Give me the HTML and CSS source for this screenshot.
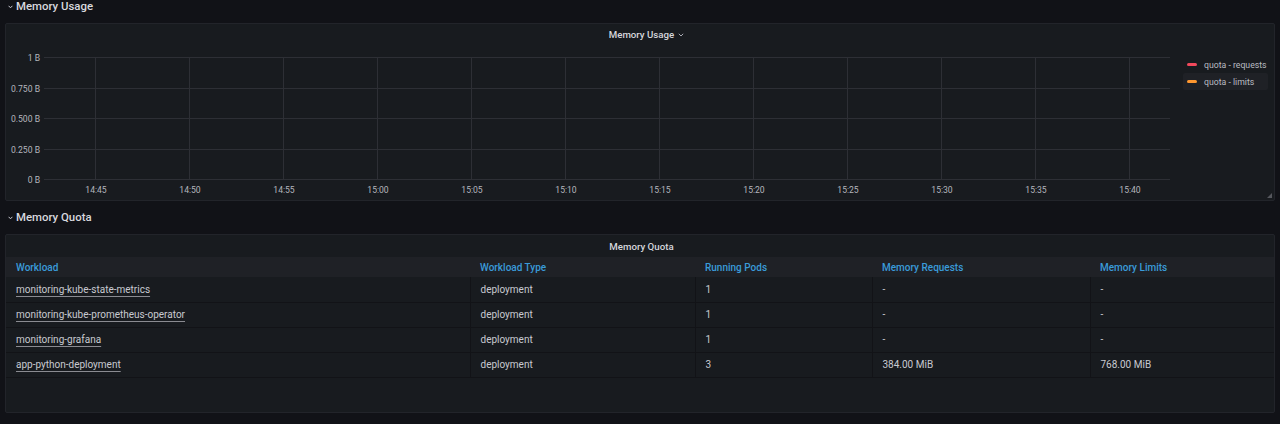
FILE: index.html
```html
<!DOCTYPE html>
<html>
<head>
<meta charset="utf-8">
<link rel="stylesheet" href="styles.css">
</head>
<body>
<div class="dash">
  <div class="row-head">
    <svg class="row-chev" width="5" height="4" viewBox="0 0 5 4"><path d="M0.6 0.8 L2.5 2.8 L4.4 0.8" fill="none" stroke="#c7c9d1" stroke-width="1"/></svg>
    <span>Memory Usage</span>
  </div>
  <section class="panel panel-graph">
    <div class="panel-title"><span class="title-text">Memory Usage</span><svg class="title-chev" width="6" height="4" viewBox="0 0 6 4"><path d="M0.8 0.8 L3 3 L5.2 0.8" fill="none" stroke="#a8aab3" stroke-width="1"/></svg></div>
    <div class="graph">
      <svg class="plot" width="1166" height="156" viewBox="0 0 1166 156">
        <g class="grid-h">
          <line x1="38" y1="13.5" x2="1164" y2="13.5"/>
          <line x1="38" y1="44.5" x2="1164" y2="44.5"/>
          <line x1="38" y1="74.5" x2="1164" y2="74.5"/>
          <line x1="38" y1="105.5" x2="1164" y2="105.5"/>
          <line x1="38" y1="135.5" x2="1164" y2="135.5"/>
        </g>
        <g class="grid-v">
          <line x1="89.5" y1="13" x2="89.5" y2="136"/>
          <line x1="183.5" y1="13" x2="183.5" y2="136"/>
          <line x1="277.5" y1="13" x2="277.5" y2="136"/>
          <line x1="371.5" y1="13" x2="371.5" y2="136"/>
          <line x1="465.5" y1="13" x2="465.5" y2="136"/>
          <line x1="559.5" y1="13" x2="559.5" y2="136"/>
          <line x1="653.5" y1="13" x2="653.5" y2="136"/>
          <line x1="747.5" y1="13" x2="747.5" y2="136"/>
          <line x1="841.5" y1="13" x2="841.5" y2="136"/>
          <line x1="935.5" y1="13" x2="935.5" y2="136"/>
          <line x1="1029.5" y1="13" x2="1029.5" y2="136"/>
          <line x1="1123.5" y1="13" x2="1123.5" y2="136"/>
        </g>
        <g class="ylab">
          <text x="34" y="16.5">1 B</text>
          <text x="34" y="47.5">0.750 B</text>
          <text x="34" y="77.5">0.500 B</text>
          <text x="34" y="108.5">0.250 B</text>
          <text x="34" y="138.5">0 B</text>
        </g>
        <g class="xlab">
          <text x="90" y="148.5">14:45</text>
          <text x="184" y="148.5">14:50</text>
          <text x="278" y="148.5">14:55</text>
          <text x="372" y="148.5">15:00</text>
          <text x="466" y="148.5">15:05</text>
          <text x="560" y="148.5">15:10</text>
          <text x="654" y="148.5">15:15</text>
          <text x="748" y="148.5">15:20</text>
          <text x="842" y="148.5">15:25</text>
          <text x="936" y="148.5">15:30</text>
          <text x="1030" y="148.5">15:35</text>
          <text x="1124" y="148.5">15:40</text>
        </g>
      </svg>
      <div class="legend">
        <div class="legend-item"><span class="swatch red"></span><span>quota - requests</span></div>
        <div class="legend-item active"><span class="swatch orange"></span><span>quota - limits</span></div>
      </div>
    </div>
    <svg class="resize" width="5" height="5" viewBox="0 0 5 5"><path d="M5 0 L5 5 L0 5 Z" fill="#55575d"/></svg>
  </section>

  <div class="row-head second">
    <svg class="row-chev" width="5" height="4" viewBox="0 0 5 4"><path d="M0.6 0.8 L2.5 2.8 L4.4 0.8" fill="none" stroke="#c7c9d1" stroke-width="1"/></svg>
    <span>Memory Quota</span>
  </div>
  <section class="panel panel-table">
    <div class="panel-title"><span class="title-text">Memory Quota</span></div>
    <table class="quota">
      <colgroup>
        <col class="c1"><col class="c2"><col class="c3"><col class="c4"><col class="c5">
      </colgroup>
      <thead>
        <tr><th>Workload</th><th>Workload Type</th><th>Running Pods</th><th>Memory Requests</th><th>Memory Limits</th></tr>
      </thead>
      <tbody>
        <tr><td><span class="link">monitoring-kube-state-metrics</span></td><td>deployment</td><td>1</td><td>-</td><td>-</td></tr>
        <tr><td><span class="link">monitoring-kube-prometheus-operator</span></td><td>deployment</td><td>1</td><td>-</td><td>-</td></tr>
        <tr><td><span class="link">monitoring-grafana</span></td><td>deployment</td><td>1</td><td>-</td><td>-</td></tr>
        <tr><td><span class="link">app-python-deployment</span></td><td>deployment</td><td>3</td><td>384.00 MiB</td><td>768.00 MiB</td></tr>
      </tbody>
    </table>
  </section>
</div>
</body>
</html>
```
FILE: styles.css
```css
* { box-sizing: border-box; }
html, body {
  margin: 0;
  padding: 0;
  background: #111217;
  width: 1280px;
  height: 424px;
  overflow: hidden;
  font-family: Roboto, "Liberation Sans", sans-serif;
  color: #ccccdc;
}
.dash {
  padding: 0 5px;
}
.row-head {
  display: flex;
  align-items: center;
  height: 12px;
  margin-bottom: 11px;
  padding-left: 3px;
  gap: 3px;
  font-size: 11.4px;
  font-weight: 500;
  color: #d8d9de;
}
.row-head.second {
  margin-top: 10px;
}
.row-chev { flex: none; margin-top: 1px; }
.panel {
  position: relative;
  background: #181b1f;
  border: 1px solid #22242a;
  border-radius: 2px;
}
.panel-graph { height: 178px; }
.panel-table { height: 179px; }
.panel-title {
  height: 20px;
  display: flex;
  align-items: center;
  justify-content: center;
  font-size: 9.7px;
  font-weight: 500;
  color: #d6d7dd;
}
.panel-table .panel-title { height: 22px; }
.title-text { padding-left: 3px; }
.title-chev { margin-top: 1px; margin-left: 4px; margin-right: -10px; }
.graph {
  display: flex;
}
.plot { flex: none; display: block; }
.grid-h line, .grid-v line {
  stroke: #2d2f35;
  stroke-width: 1;
}
.ylab text {
  fill: #b4b6bd;
  font-size: 8.6px;
  text-anchor: end;
  font-family: Roboto, "Liberation Sans", sans-serif;
}
.xlab text {
  fill: #b4b6bd;
  font-size: 8.6px;
  text-anchor: middle;
  font-family: Roboto, "Liberation Sans", sans-serif;
}
.legend {
  flex: 1;
  padding: 12px 6px 0 11px;
  display: flex;
  flex-direction: column;
}
.legend-item {
  display: flex;
  align-items: center;
  gap: 7px;
  height: 17px;
  padding-left: 4px;
  font-size: 8.7px;
  color: #b9bbc2;
  border-radius: 2px;
}
.legend-item.active {
  background: #1f2126;
}
.swatch {
  width: 10px;
  height: 3px;
  border-radius: 1.5px;
}
.swatch.red { background: #f2495c; }
.swatch.orange { background: #ff9830; }
.resize {
  position: absolute;
  right: 2px;
  bottom: 2px;
}
.quota {
  width: 100%;
  border-collapse: collapse;
  table-layout: fixed;
  font-size: 10px;
}
.c1 { width: 464px; }
.c2 { width: 225px; }
.c3 { width: 177px; }
.c4 { width: 218px; }
.c5 { width: auto; }
.quota th {
  height: 20px;
  padding: 0 10px;
  text-align: left;
  font-weight: 500;
  color: #3a9bd9;
  background: #1f2126;
  white-space: nowrap;
}
.quota td {
  height: 25px;
  padding: 0 10px;
  border-bottom: 1px solid #121317;
  border-right: 1px solid #121317;
  color: #c8cad1;
  white-space: nowrap;
}
.quota td:last-child { border-right: none; }
.link {
  text-decoration: underline;
  text-decoration-color: #8a8b91;
  text-underline-offset: 3px;
  text-decoration-thickness: 1px;
}
```
